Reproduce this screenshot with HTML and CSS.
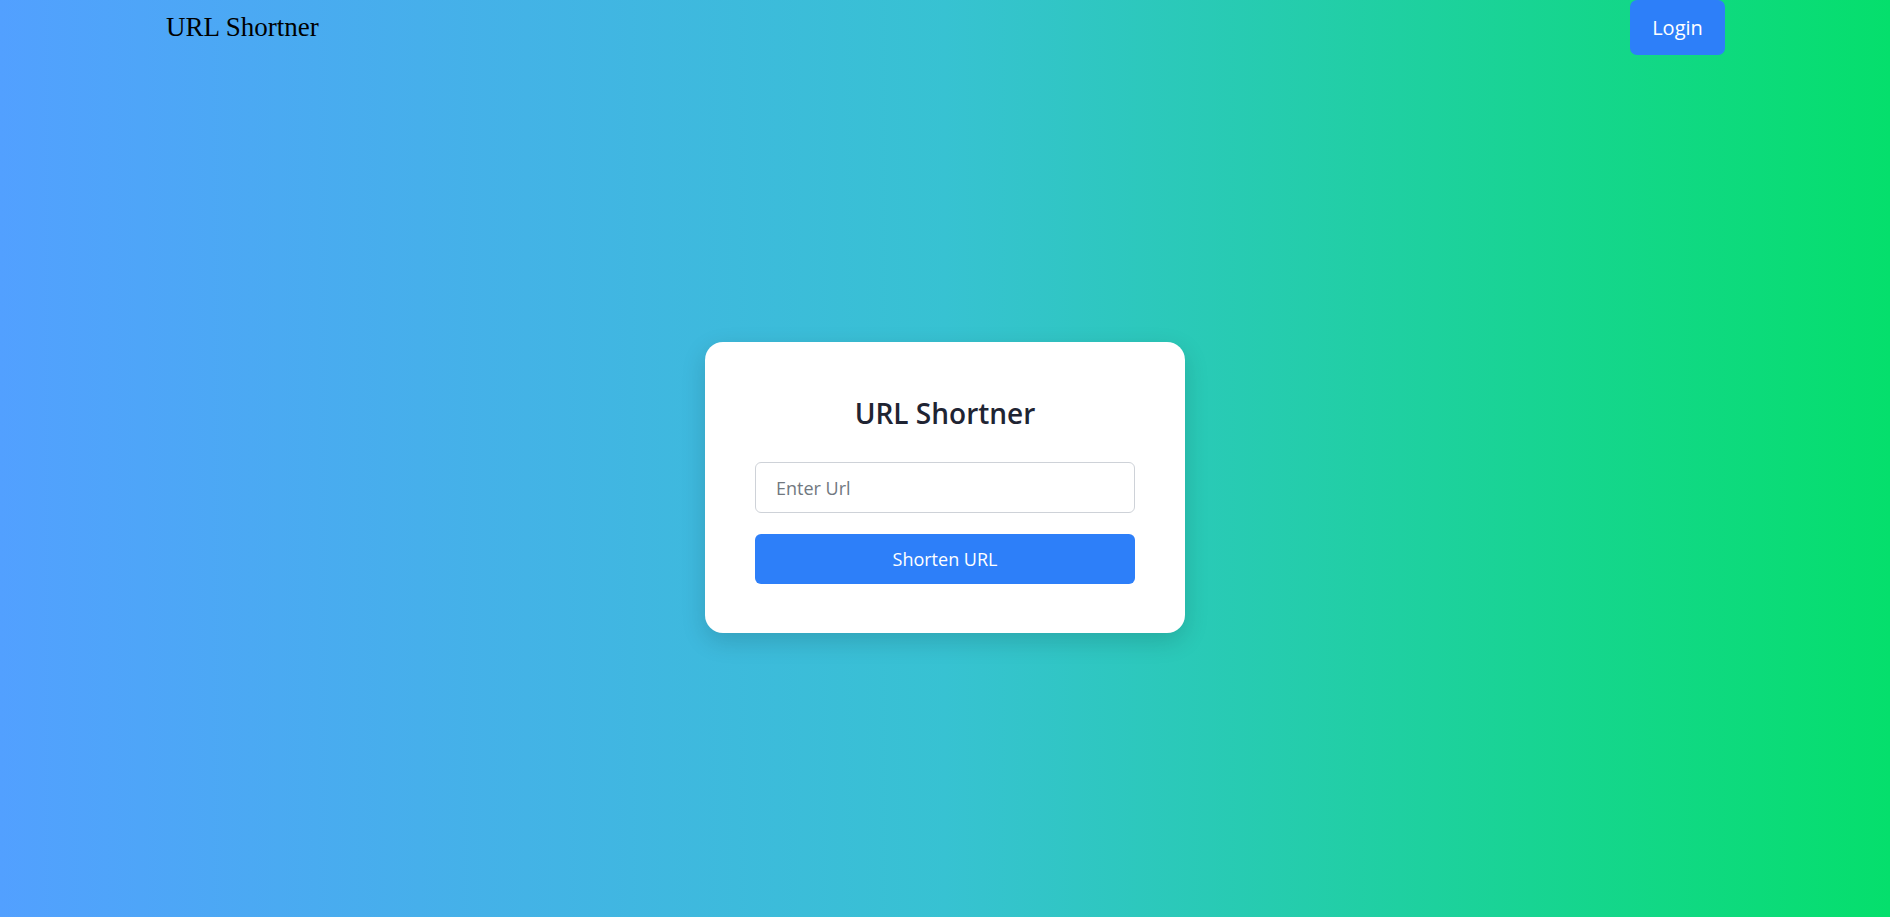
FILE: index.html
```html
<!DOCTYPE html>
<html lang="en">
<head>
<meta charset="utf-8">
<title>URL Shortner</title>
<link rel="stylesheet" href="styles.css">
</head>
<body>
<div class="page">
  <header class="navbar">
    <div class="brand">URL Shortner</div>
    <button class="login-btn">Login</button>
  </header>
  <main class="main">
    <div class="card">
      <h2 class="card-title">URL Shortner</h2>
      <input class="url-input" type="text" placeholder="Enter Url">
      <button class="shorten-btn">Shorten URL</button>
    </div>
  </main>
</div>
</body>
</html>
```

FILE: styles.css
```css
* { box-sizing: border-box; }
html, body { margin: 0; padding: 0; height: 100%; }
body {
  font-family: "Open Sans", "Noto Sans", sans-serif;
  background: linear-gradient(90deg, #52a0ff 0%, #37c2d2 50%, #05df6c 100%);
}
.page {
  min-height: 100vh;
  display: flex;
  flex-direction: column;
}
.navbar {
  height: 55px;
  display: flex;
  align-items: center;
  justify-content: space-between;
  padding: 0 165px 0 165px;
}
.brand {
  font-family: "Liberation Serif", "Times New Roman", serif;
  font-size: 27px;
  color: #000;
  padding-left: 1px;
  margin-top: 0;
}
.login-btn {
  align-self: flex-start;
  height: 55px;
  width: 95px;
  border: none;
  border-radius: 7px;
  background: #2d7ff9;
  color: #fff;
  font-family: "Open Sans", "Noto Sans", sans-serif;
  font-size: 20px;
  cursor: pointer;
}
.main {
  flex: 1;
  display: flex;
  align-items: center;
  justify-content: center;
  padding-top: 3px;
}
.card {
  width: 480px;
  background: #fff;
  border-radius: 18px;
  padding: 50px 50px 49px;
  display: flex;
  flex-direction: column;
  box-shadow: 0 8px 24px rgba(0, 0, 0, 0.15);
}
.card-title {
  margin: 0 0 28px;
  text-align: center;
  font-size: 28px;
  font-weight: 600;
  color: #1f2433;
  line-height: 42px;
}
.url-input {
  height: 51px;
  border: 1px solid #ced2d8;
  border-radius: 6px;
  padding: 0 20px;
  font-family: "Open Sans", "Noto Sans", sans-serif;
  font-size: 18px;
  color: #333;
  margin-bottom: 21px;
  outline: none;
}
.url-input::placeholder { color: #717880; }
.shorten-btn {
  height: 50px;
  border: none;
  border-radius: 6px;
  background: #2d7ff9;
  color: #fff;
  font-family: "Open Sans", "Noto Sans", sans-serif;
  font-size: 18px;
  cursor: pointer;
}
```
